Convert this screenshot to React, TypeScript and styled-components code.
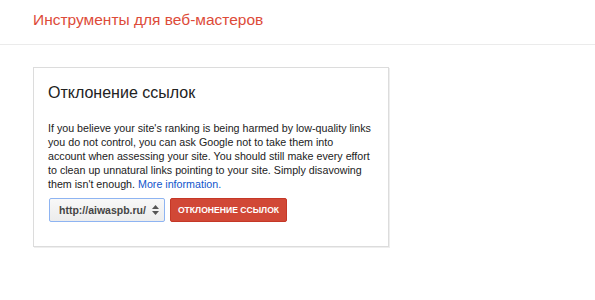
import styled, { createGlobalStyle } from 'styled-components'

const GlobalStyle = createGlobalStyle`
  html, body {
    margin: 0;
    padding: 0;
    background: #fff;
  }
  body {
    font-family: 'Liberation Sans', Arial, sans-serif;
    color: #222;
  }
`

const Header = styled.header`
  height: 45px;
  border-bottom: 1px solid #ebebeb;
  display: flex;
  align-items: center;
  padding: 0 33px;
  box-sizing: border-box;
`

const Brand = styled.div`
  color: #dd4b39;
  font-size: 15.5px;
  margin-top: -4px;
`

const Main = styled.main`
  padding: 22px 33px;
`

const Card = styled.section`
  width: 356px;
  height: 180px;
  box-sizing: border-box;
  border: 1px solid #dcdcdc;
  box-shadow: 1px 1px 0 #eee;
  padding: 14px 14px 0 14px;
`

const CardTitle = styled.h2`
  margin: 0;
  font-size: 16px;
  font-weight: normal;
  color: #222;
  line-height: 22px;
`

const Description = styled.p`
  margin: 17px 0 0;
  max-width: 324px;
  font-size: 10.7px;
  line-height: 14px;
  color: #222;
`

const MoreLink = styled.a`
  color: #15c;
  text-decoration: none;
`

const Controls = styled.div`
  display: flex;
  align-items: center;
  gap: 5px;
  margin-top: 7px;
  padding-left: 1px;
`

const SiteSelect = styled.div`
  width: 116px;
  height: 24px;
  box-sizing: border-box;
  border: 1px solid #8eb4f2;
  border-radius: 2px;
  background: linear-gradient(#f8f8f8, #ececec);
  display: flex;
  align-items: center;
  justify-content: space-between;
  padding: 0 5px 0 9px;
  font-size: 10.5px;
  font-weight: bold;
  color: #444;
`

const Arrows = styled.svg`
  width: 7px;
  height: 10px;
`

const DisavowButton = styled.button`
  height: 24px;
  width: 117px;
  border: 1px solid #c53727;
  border-radius: 2px;
  background: #d14836;
  color: #fff;
  font-family: 'Liberation Sans', Arial, sans-serif;
  font-size: 8.6px;
  font-weight: bold;
  text-transform: uppercase;
  padding: 0;
  cursor: pointer;
`

export default function App() {
  return (
    <>
      <GlobalStyle />
      <Header>
        <Brand>Инструменты для веб-мастеров</Brand>
      </Header>
      <Main>
        <Card>
          <CardTitle>Отклонение ссылок</CardTitle>
          <Description>
            If you believe your site's ranking is being harmed by low-quality links you do not
            control, you can ask Google not to take them into account when assessing your site. You
            should still make every effort to clean up unnatural links pointing to your site. Simply
            disavowing them isn't enough. <MoreLink href="#">More information.</MoreLink>
          </Description>
          <Controls>
            <SiteSelect>
              <span>http://aiwaspb.ru/</span>
              <Arrows viewBox="0 0 7 10">
                <path d="M3.5 0 L7 4 H0 Z" fill="#555" />
                <path d="M0 6 H7 L3.5 10 Z" fill="#555" />
              </Arrows>
            </SiteSelect>
            <DisavowButton>Отклонение ссылок</DisavowButton>
          </Controls>
        </Card>
      </Main>
    </>
  )
}
